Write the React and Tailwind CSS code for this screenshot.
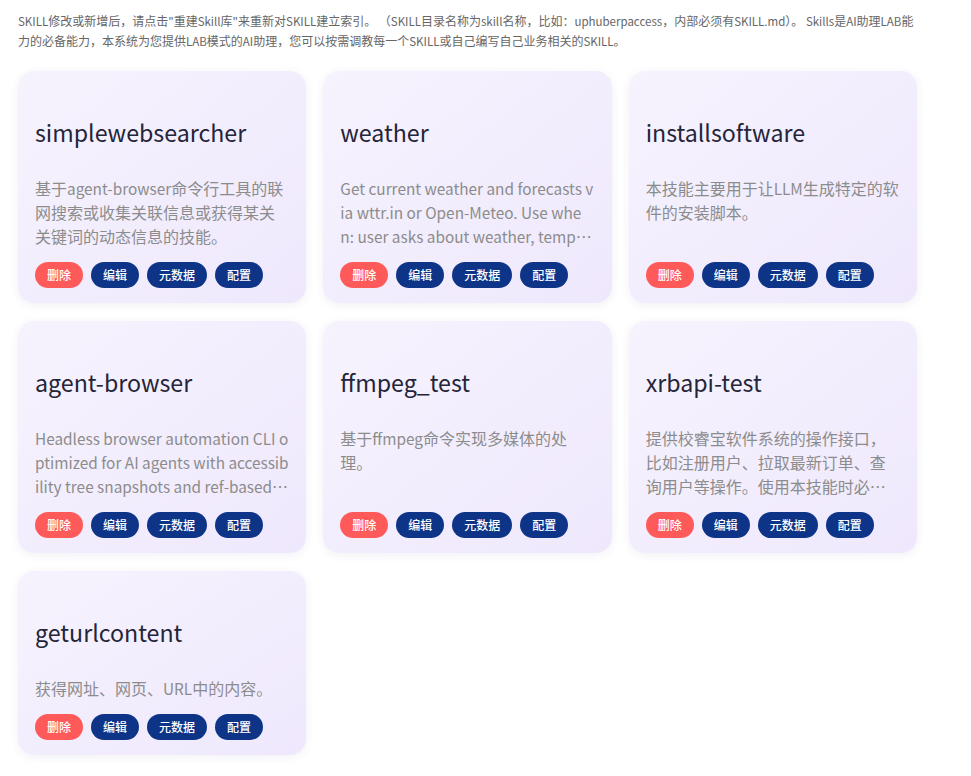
const skills = [
  {
    name: "simplewebsearcher",
    desc: "基于agent-browser命令行工具的联网搜索或收集关联信息或获得某关关键词的动态信息的技能。",
  },
  {
    name: "weather",
    desc: "Get current weather and forecasts via wttr.in or Open-Meteo. Use when: user asks about weather, temperature, or forecasts for any location.",
  },
  {
    name: "installsoftware",
    desc: "本技能主要用于让LLM生成特定的软件的安装脚本。",
  },
  {
    name: "agent-browser",
    desc: "Headless browser automation CLI optimized for AI agents with accessibility tree snapshots and ref-based element selection.",
  },
  {
    name: "ffmpeg_test",
    desc: "基于ffmpeg命令实现多媒体的处理。",
  },
  {
    name: "xrbapi-test",
    desc: "提供校睿宝软件系统的操作接口，比如注册用户、拉取最新订单、查询用户等操作。使用本技能时必须先登录系统。",
  },
  {
    name: "geturlcontent",
    desc: "获得网址、网页、URL中的内容。",
  },
];

// Latin runs are set a touch smaller than the CJK text around them,
// so mixed lines keep a narrower Western face.
function Mixed({ text, latin }) {
  const parts = text.split(/([\x20-\x7E]+)/).filter(Boolean);
  return parts.map((p, i) =>
    /^[\x20-\x7E]+$/.test(p) ? (
      <span key={i} className={latin}>
        {p}
      </span>
    ) : (
      <span key={i}>{p}</span>
    )
  );
}

function SkillCard({ name, desc }) {
  return (
    <div className="flex flex-col rounded-2xl bg-gradient-to-br from-[#f6f3fd] to-[#efe8fd] px-[17px] pt-[45px] pb-[15px] shadow-[0_2px_10px_rgba(60,40,120,0.07)]">
      <div className="text-[23.2px] leading-[32px] text-[#25253a]">{name}</div>
      <div className="mt-[28px] mb-[14px] line-clamp-3 break-all text-[16px] leading-[24px] text-[#8c8c8c]">
        <Mixed text={desc} latin="text-[15.36px]" />
      </div>
      <div className="mt-auto flex gap-2">
        <button className="h-[26px] w-[48px] rounded-full bg-[#ff5a5a] text-[12px] font-medium text-white">删除</button>
        <button className="h-[26px] w-[48px] rounded-full bg-[#0d3487] text-[12px] font-medium text-white">编辑</button>
        <button className="h-[26px] w-[60px] rounded-full bg-[#0d3487] text-[12px] font-medium text-white">元数据</button>
        <button className="h-[26px] w-[48px] rounded-full bg-[#0d3487] text-[12px] font-medium text-white">配置</button>
      </div>
    </div>
  );
}

const intro =
  'SKILL修改或新增后，请点击"重建Skill库"来重新对SKILL建立索引。 （SKILL目录名称为skill名称，比如：uphuberpaccess，内部必须有SKILL.md）。 Skills是AI助理LAB能力的必备能力，本系统为您提供LAB模式的AI助理，您可以按需调教每一个SKILL或自己编写自己业务相关的SKILL。';

export default function App() {
  return (
    <div
      className="min-h-screen bg-white pl-[18px] pt-[11px] pb-[20px]"
      style={{ fontFamily: '"Noto Sans CJK SC", "Noto Sans", sans-serif' }}
    >
      <div className="w-[899px]">
        <p className="text-[12px] leading-[20px] text-[#666]">
          <Mixed text={intro} latin="text-[11.5px]" />
        </p>
        <div className="mt-[20px] grid grid-cols-3 gap-x-[17px] gap-y-[18px]">
          {skills.map((s) => (
            <SkillCard key={s.name} {...s} />
          ))}
        </div>
      </div>
    </div>
  );
}
